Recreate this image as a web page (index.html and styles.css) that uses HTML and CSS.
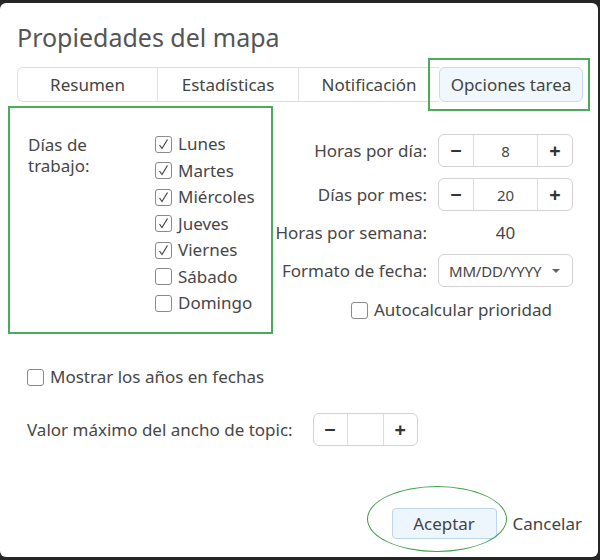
FILE: index.html
```html
<!DOCTYPE html>
<html lang="es">
<head>
    <meta charset="UTF-8">
    <meta name="viewport" content="width=device-width, initial-scale=1.0">
    <title>Propiedades del mapa</title>
    <link rel="stylesheet" href="styles.css">
</head>
<body>
<div class="dialog">
    <h1 class="title">Propiedades del mapa</h1>

    <div class="tabs">
        <div class="tab">Resumen</div>
        <div class="tab">Estadísticas</div>
        <div class="tab">Notificación</div>
        <div class="tab active">Opciones tarea<span class="mark-rect"></span></div>
    </div>

    <div class="content">
        <div class="days">
            <div class="days-label">Días de<br>trabajo:</div>
            <div class="day-list">
                <label class="check"><span class="box on"><svg width="15" height="15" viewBox="0 0 15 15"><path d="M3.5 8 L6 11.5 L11.5 2.5" fill="none" stroke="#444" stroke-width="1.2"/></svg></span>Lunes</label>
                <label class="check"><span class="box on"><svg width="15" height="15" viewBox="0 0 15 15"><path d="M3.5 8 L6 11.5 L11.5 2.5" fill="none" stroke="#444" stroke-width="1.2"/></svg></span>Martes</label>
                <label class="check"><span class="box on"><svg width="15" height="15" viewBox="0 0 15 15"><path d="M3.5 8 L6 11.5 L11.5 2.5" fill="none" stroke="#444" stroke-width="1.2"/></svg></span>Miércoles</label>
                <label class="check"><span class="box on"><svg width="15" height="15" viewBox="0 0 15 15"><path d="M3.5 8 L6 11.5 L11.5 2.5" fill="none" stroke="#444" stroke-width="1.2"/></svg></span>Jueves</label>
                <label class="check"><span class="box on"><svg width="15" height="15" viewBox="0 0 15 15"><path d="M3.5 8 L6 11.5 L11.5 2.5" fill="none" stroke="#444" stroke-width="1.2"/></svg></span>Viernes</label>
                <label class="check"><span class="box"></span>Sábado</label>
                <label class="check"><span class="box"></span>Domingo</label>
            </div>
        </div>

        <div class="options">
            <div class="opt-label">Horas por día:</div>
            <div class="spinner">
                <span class="spin-btn">&minus;</span><span class="spin-val">8</span><span class="spin-btn">+</span>
            </div>

            <div class="opt-label">Días por mes:</div>
            <div class="spinner">
                <span class="spin-btn">&minus;</span><span class="spin-val">20</span><span class="spin-btn">+</span>
            </div>

            <div class="opt-label">Horas por semana:</div>
            <div class="plain-val">40</div>

            <div class="opt-label">Formato de fecha:</div>
            <div class="select">MM/DD/YYYY<span class="caret"></span></div>

            <label class="check autocalc"><span class="box"></span>Autocalcular prioridad</label>
        </div>
    </div>

    <div class="extra">
        <label class="check"><span class="box"></span>Mostrar los años en fechas</label>
        <div class="topic-row">
            <span>Valor máximo del ancho de topic:</span>
            <div class="spinner small">
                <span class="spin-btn">&minus;</span><span class="spin-val"></span><span class="spin-btn">+</span>
            </div>
        </div>
    </div>

    <div class="footer">
        <div class="accept-wrap">
            <button class="btn-accept">Aceptar</button>
            <span class="mark-ellipse"></span>
        </div>
        <span class="cancel">Cancelar</span>
    </div>
</div>
</body>
</html>
```

FILE: styles.css
```css
body{
    margin: 0;
    background: #262626;
    font-family: "Noto Sans", sans-serif;
    color: #474747;
    font-size: 17px;
}
.dialog{
    margin-top: 3px;
    width: 598px;
    height: 554px;
    background: #fff;
    border-radius: 6px;
    padding: 18px 0 0 0;
    box-sizing: border-box;
}
.title{
    margin: 0 0 0 17px;
    font-size: 25px;
    font-weight: normal;
    line-height: 32px;
    color: #555;
}

/* tabs */
.tabs{
    margin: 14px 0 0 17px;
    display: grid;
    grid-template-columns: 140px 141px 141px 144px;
    width: 566px;
    height: 35px;
}
.tab{
    position: relative;
    display: flex;
    align-items: center;
    justify-content: center;
    border-top: 1px solid #dedede;
    border-bottom: 1px solid #dedede;
    border-left: 1px solid #e2e2e2;
    color: #444;
}
.tab:first-child{
    border-radius: 6px 0 0 6px;
}
.tab.active{
    background: #f0f7fd;
    border: 1px solid #c4dcf0;
    border-radius: 6px;
}
.mark-rect{
    position: absolute;
    left: -12px;
    right: -8px;
    top: -10px;
    bottom: -10px;
    border: 2px solid #4caa5c;
}

/* main area */
.content{
    display: flex;
    margin: 4px 0 0 8px;
}
.days{
    width: 265px;
    height: 228px;
    box-sizing: border-box;
    border: 2px solid #4caa5c;
    padding: 23px 0 0 18px;
    display: flex;
}
.days-label{
    width: 127px;
    line-height: 21px;
    margin-top: 3px;
}
.check{
    display: flex;
    align-items: center;
    gap: 6px;
    line-height: 26.5px;
}
.box{
    width: 15px;
    height: 15px;
    border: 1px solid #8a8a8a;
    border-radius: 3px;
    display: inline-flex;
}

.options{
    margin-top: 28px;
    display: grid;
    grid-template-columns: 154px 135px;
    grid-template-rows: 33px 33px 21px 33px auto;
    column-gap: 11px;
    row-gap: 11px;
    align-items: center;
    align-content: start;
    width: 300px;
}
.opt-label{
    text-align: right;
    white-space: nowrap;
}
.spinner{
    display: flex;
    height: 33px;
    box-sizing: border-box;
    border: 1px solid #d2d2d2;
    border-radius: 6px;
}
.spin-btn{
    width: 34px;
    display: flex;
    align-items: center;
    justify-content: center;
    font-size: 20px;
    font-weight: bold;
    color: #333;
}
.spin-val{
    flex: 1;
    display: flex;
    align-items: center;
    justify-content: center;
    border-left: 1px solid #ddd;
    border-right: 1px solid #ddd;
    font-size: 15px;
}
.plain-val{
    text-align: center;
}
.select{
    height: 33px;
    box-sizing: border-box;
    border: 1px solid #d2d2d2;
    border-radius: 6px;
    display: flex;
    align-items: center;
    padding-left: 10px;
    font-size: 15px;
    letter-spacing: -0.2px;
    color: #444;
}
.caret{
    margin-left: 11px;
    width: 0;
    height: 0;
    border-left: 4px solid transparent;
    border-right: 4px solid transparent;
    border-top: 4px solid #666;
}
.autocalc{
    grid-column: 1 / -1;
    padding-left: 78px;
    margin-top: -1px;
}

/* bottom area */
.extra{
    margin: 30px 0 0 27px;
}
.topic-row{
    margin-top: 22px;
    display: flex;
    align-items: center;
    gap: 20px;
}
.spinner.small{
    width: 105px;
}
.spinner.small .spin-val{
    flex: 0 0 35px;
}

.footer{
    margin-top: 62px;
    display: flex;
    justify-content: flex-end;
    align-items: center;
    padding-right: 16px;
    gap: 16px;
}
.accept-wrap{
    position: relative;
}
.btn-accept{
    width: 105px;
    height: 31px;
    background: #eef6fd;
    border: 1px solid #bcd6ec;
    border-radius: 4px;
    font-family: "Noto Sans", sans-serif;
    font-size: 17px;
    color: #444;
}
.mark-ellipse{
    position: absolute;
    left: -25px;
    right: -10px;
    top: -22px;
    bottom: -13px;
    border: 1.5px solid #3f9f4e;
    border-radius: 50%;
}
.cancel{
    color: #444;
}
```
